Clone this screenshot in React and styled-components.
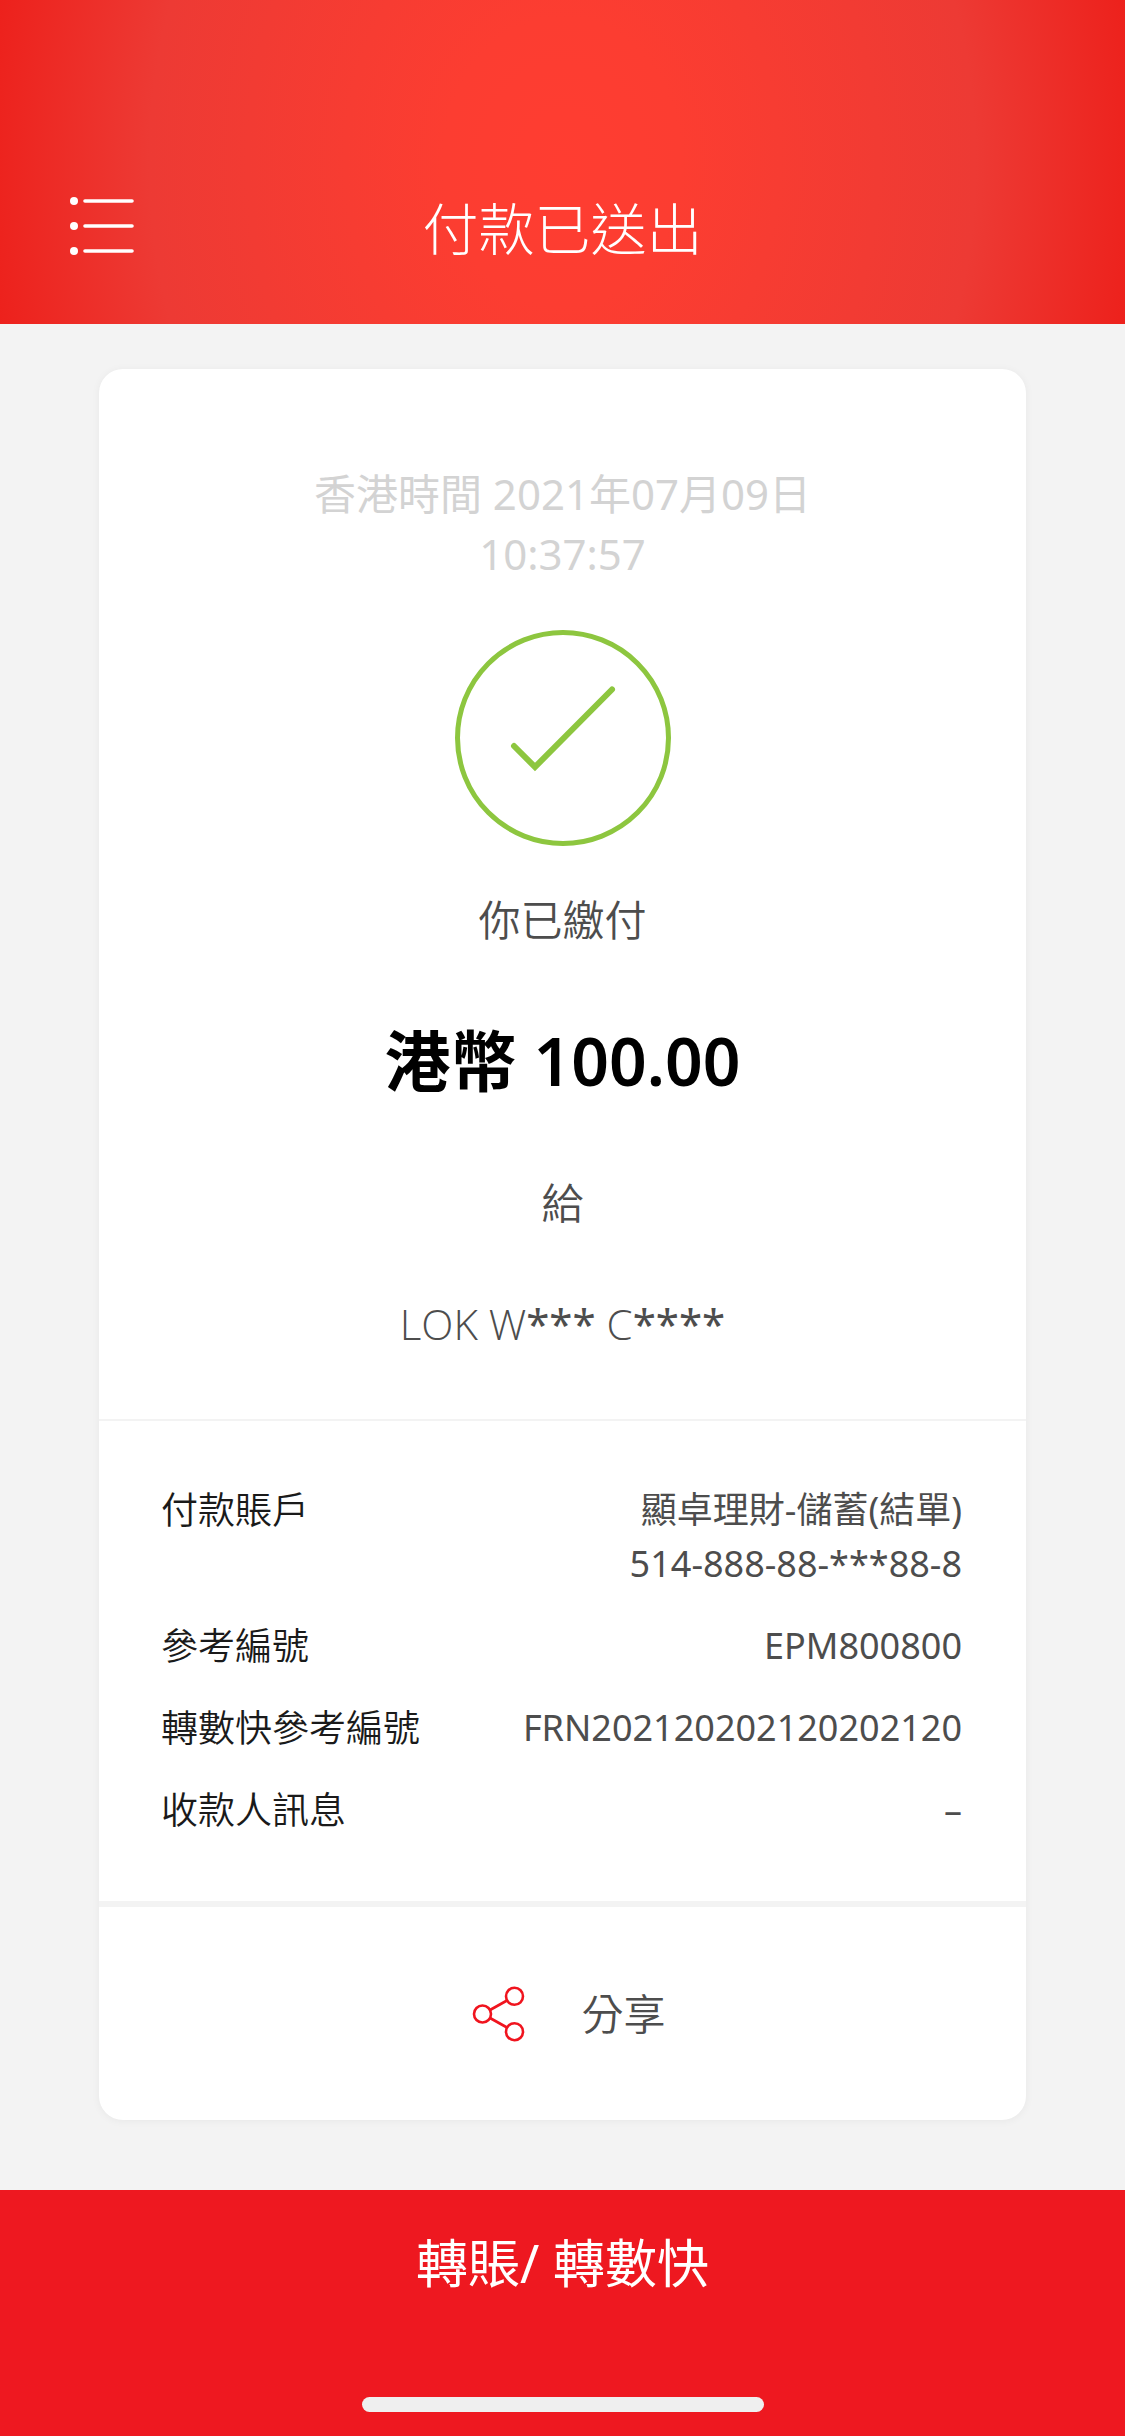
import styled, { createGlobalStyle } from 'styled-components';

const GlobalStyle = createGlobalStyle`
	* {
		box-sizing: border-box;
	}
	body {
		margin: 0;
		background: #f3f3f3;
		font-family: 'Noto Sans', 'Noto Sans CJK TC', sans-serif;
		color: #4d4d4d;
	}
	button {
		border: 0;
		padding: 0;
		background: none;
		color: inherit;
		font: inherit;
		cursor: pointer;
	}
`;

const details = [
	{ label: '付款賬戶', lines: ['顯卓理財-儲蓄(結單)', '514-888-88-***88-8'] },
	{ label: '參考編號', lines: ['EPM800800'] },
	{ label: '轉數快參考編號', lines: ['FRN202120202120202120'] },
	{ label: '收款人訊息', lines: ['–'] },
];

const Page = styled.div`
	display: flex;
	flex-direction: column;
	min-height: 100vh;
`;

const Header = styled.header`
	display: grid;
	grid-template-columns: 1fr auto 1fr;
	align-items: center;
	padding: 188px 68px 56px;
	background: radial-gradient(
		ellipse 590px 720px at 50% 50%,
		#ff3d31 0,
		#fc3d31 20%,
		#ed3a34 70%,
		#ed211c 98%
	);
`;

const MenuButton = styled.button`
	display: flex;
	justify-self: start;
	padding-bottom: 4px;
`;

const Title = styled.h1`
	margin: 0;
	color: #fff;
	font-size: 56px;
	font-weight: 300;
	line-height: 80px;
`;

const Main = styled.main`
	flex: 1;
	padding: 45px 99px 70px;
`;

const Card = styled.article`
	border-radius: 24px;
	background: #fff;
	box-shadow: 0 1px 8px rgba(0, 0, 0, 0.05);
`;

const Summary = styled.section`
	display: flex;
	flex-direction: column;
	align-items: center;
	padding: 95px 180px 65px;
	text-align: center;
`;

const Text = styled.p`
	margin: 0;
	color: ${({ $muted }) => ($muted ? '#d3d3d3' : '#4d4d4d')};
	font-size: 42px;
	font-weight: ${({ $thin }) => ($thin ? 350 : 400)};
	line-height: 60px;
`;

const Amount = styled.strong`
	margin: 65px 0 68px;
	color: #000;
	font-size: 66px;
	font-weight: 600;
	line-height: 90px;
`;

const Payee = styled(Text)`
	margin-top: 61px;

	& span {
		font-family: 'Open Sans', sans-serif;
		font-weight: 300;
	}
`;

const DoneIcon = styled.svg`
	margin: 46px 0 44px;
`;

const Details = styled.dl`
	display: flex;
	flex-direction: column;
	gap: 28px;
	margin: 0;
	padding: 62px 64px 64px 62px;
	border-top: 2px solid #f3f3f3;
	border-bottom: 6px solid #f3f3f3;
`;

const DetailRow = styled.div`
	display: flex;
	justify-content: space-between;
	font-size: 36px;
	line-height: 54px;

	& dt {
		color: #1a1a1a;
		font-size: 37px;
		font-weight: 350;
	}
	& dd {
		margin: 0;
		text-align: right;
	}
	& dd span {
		display: block;
	}
`;

const ShareButton = styled.button`
	display: flex;
	align-items: center;
	justify-content: center;
	gap: 56px;
	width: 100%;
	padding: 77px 0 76px;
	font-size: 42px;
	font-weight: 350;
	line-height: 60px;
`;

const Footer = styled.footer`
	display: flex;
	flex-direction: column;
	align-items: center;
	padding-bottom: 24px;
	background: #ee1820;
`;

const TransferButton = styled.button`
	width: 100%;
	padding: 38px 0 99px;
	color: #fff;
	font-size: 52px;
	line-height: 70px;
`;

const HomeBar = styled.div`
	width: 402px;
	height: 15px;
	border-radius: 8px;
	background: #efefef;
`;

const MenuIcon = () => (
	<svg width="68" height="60" viewBox="0 0 68 60" fill="none" aria-hidden="true">
		<g fill="#fff">
			<circle cx="6" cy="5" r="4" />
			<circle cx="6" cy="30" r="4" />
			<circle cx="6" cy="55" r="4" />
		</g>
		<path
			d="M17 5h47M17 30h47M17 55h47"
			stroke="#fff"
			strokeWidth="3.6"
			strokeLinecap="round"
		/>
	</svg>
);

const ShareIcon = () => (
	<svg
		width="66"
		height="60"
		viewBox="0 0 66 60"
		fill="none"
		stroke="#f0141e"
		strokeWidth="2.6"
		aria-hidden="true"
	>
		<circle cx="23.500" cy="30" r="8.5" />
		<circle cx="55.500" cy="12.3" r="8.5" />
		<circle cx="55.500" cy="47.7" r="8.5" />
		<path d="M31 26l17-9.5M31 34l17 9.5" />
	</svg>
);

const CheckMark = () => (
	<DoneIcon
		width="216"
		height="216"
		viewBox="0 0 216 216"
		fill="none"
		stroke="#8dc63f"
		aria-hidden="true"
	>
		<circle cx="108" cy="108" r="105.5" strokeWidth="5" />
		<path d="M59 116l21 21L157 59.5" strokeWidth="6" strokeLinecap="round" />
	</DoneIcon>
);

const App = () => (
	<>
		<GlobalStyle />
		<Page>
			<Header>
				<MenuButton type="button" aria-label="選單">
					<MenuIcon />
				</MenuButton>
				<Title>付款已送出</Title>
			</Header>

			<Main>
				<Card>
					<Summary>
						<Text $muted>香港時間 2021年07月09日 10:37:57</Text>
						<CheckMark />
						<Text $thin>你已繳付</Text>
						<Amount>港幣 100.00</Amount>
						<Text $thin>給</Text>
						<Payee>
							<span>LOK W</span>*** <span>C</span>****
						</Payee>
					</Summary>

					<Details>
						{details.map(({ label, lines }) => (
							<DetailRow key={label}>
								<dt>{label}</dt>
								<dd>
									{lines.map((line) => (
										<span key={line}>{line}</span>
									))}
								</dd>
							</DetailRow>
						))}
					</Details>

					<ShareButton type="button">
						<ShareIcon />
						分享
					</ShareButton>
				</Card>
			</Main>

			<Footer>
				<TransferButton type="button">轉賬/ 轉數快</TransferButton>
				<HomeBar />
			</Footer>
		</Page>
	</>
);

export default App;
